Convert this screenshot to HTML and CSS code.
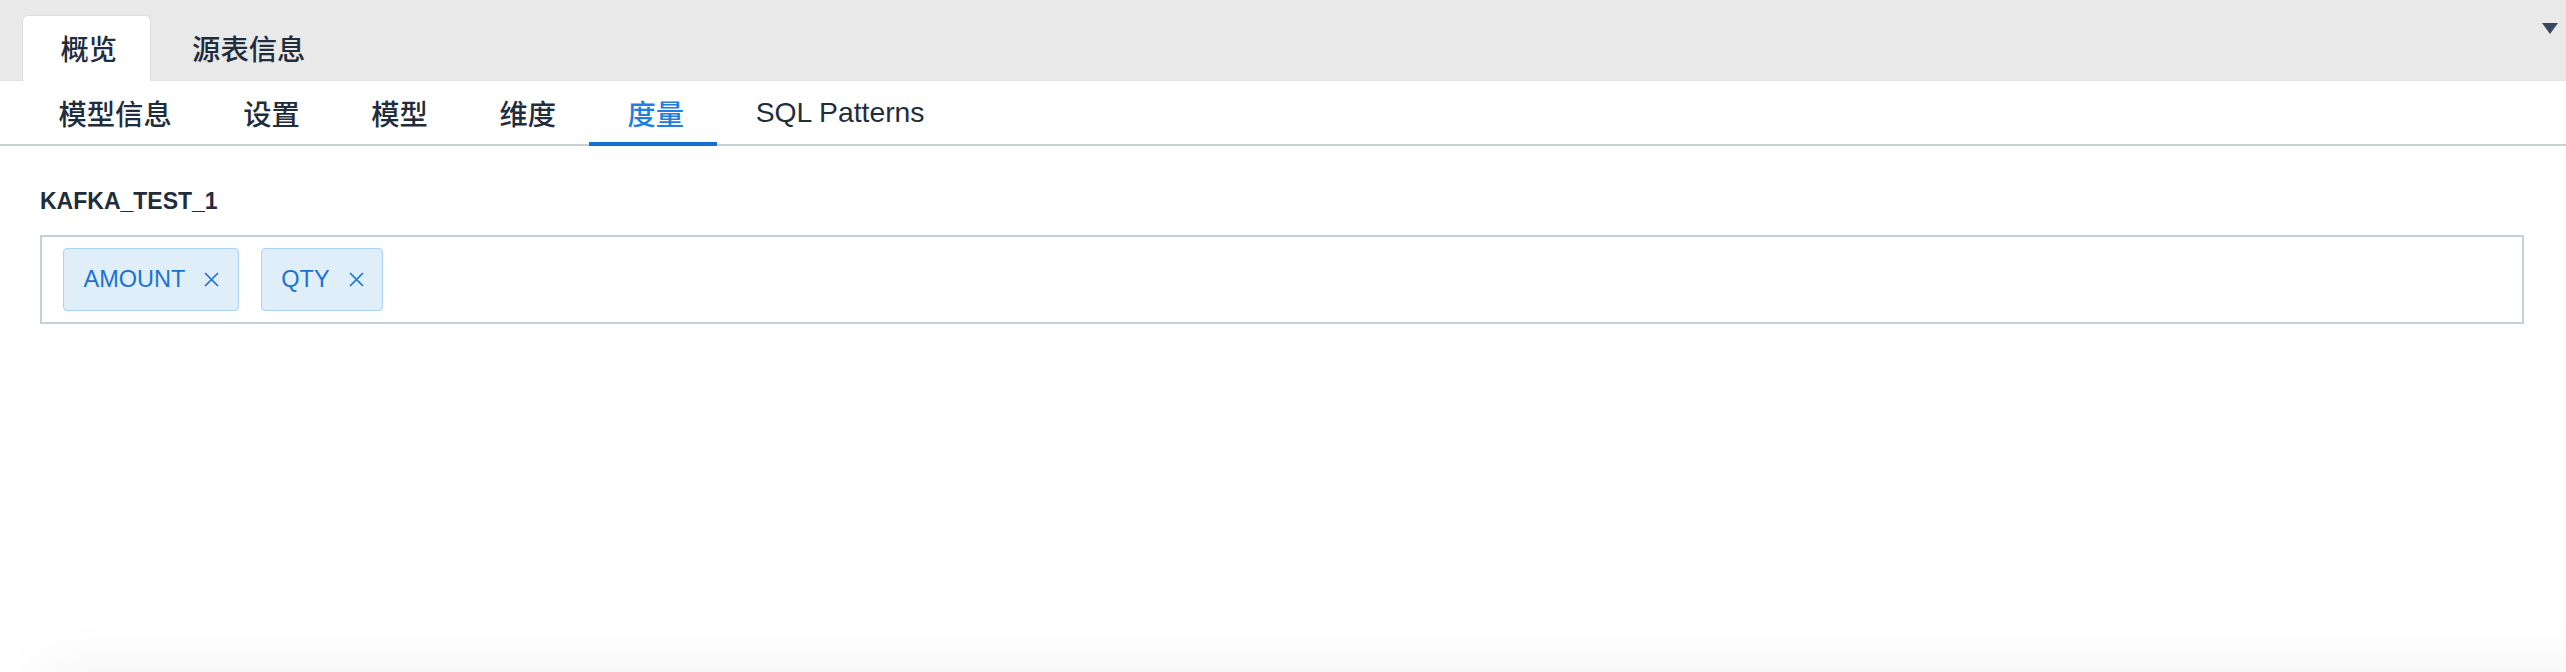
FILE: index.html
```html
<!DOCTYPE html>
<html lang="zh">
<head>
<meta charset="utf-8">
<title>概览</title>
<link rel="stylesheet" href="styles.css">
</head>
<body>
<div class="page">
  <div class="topbar">
    <div class="top-tabs">
      <div class="top-tab active">概览</div>
      <div class="top-tab">源表信息</div>
    </div>
    <div class="caret"></div>
  </div>
  <nav class="subnav">
    <div class="subnav-item">模型信息</div>
    <div class="subnav-item">设置</div>
    <div class="subnav-item">模型</div>
    <div class="subnav-item">维度</div>
    <div class="subnav-item active">度量</div>
    <div class="subnav-item">SQL Patterns</div>
  </nav>
  <main class="content">
    <h3 class="table-name">KAFKA_TEST_1</h3>
    <div class="tag-box">
      <span class="tag">AMOUNT<svg class="tag-close" viewBox="0 0 15 15" width="15" height="15"><path d="M1 1L14 14M14 1L1 14" /></svg></span>
      <span class="tag">QTY<svg class="tag-close" viewBox="0 0 15 15" width="15" height="15"><path d="M1 1L14 14M14 1L1 14" /></svg></span>
    </div>
  </main>
  <div class="below-panel"></div>
</div>
</body>
</html>
```
FILE: styles.css
```css
html, body {
  margin: 0;
  padding: 0;
  overflow: hidden;
  background: #ffffff;
}

body {
  font-family: "Liberation Sans", "Noto Sans CJK SC", sans-serif;
  color: #1f2d3d;
}

.page {
  width: 2566px;
  height: 672px;
  overflow: hidden;
}

.topbar {
  height: 81px;
  box-sizing: border-box;
  background: #e9e9e9;
  border-bottom: 1.5px solid #dfe3e7;
  display: flex;
  justify-content: space-between;
  align-items: flex-start;
  padding-left: 22px;
  padding-right: 8px;
}

.top-tabs {
  display: flex;
  align-items: flex-end;
  height: 81px;
}

.top-tab {
  height: 66px;
  box-sizing: border-box;
  display: flex;
  align-items: center;
  padding: 0 33px 2px 39px;
  font-size: 28.3px;
  font-weight: 500;
  margin-right: 2px;
  color: #1f2d3d;
}

.top-tab.active {
  background: #ffffff;
  border: 1.5px solid #dcdfe3;
  border-bottom: none;
  border-radius: 6px 6px 0 0;
  height: 66px;
  padding-left: 37.5px;
}

.caret {
  margin-top: 23px;
  width: 0;
  height: 0;
  border-left: 8px solid transparent;
  border-right: 8px solid transparent;
  border-top: 11px solid #34495e;
}

.subnav {
  display: flex;
  height: 65px;
  box-sizing: border-box;
  border-bottom: 2px solid #c8d0d4;
  padding-left: 20px;
  background: #ffffff;
}

.subnav-item {
  height: 65px;
  margin-bottom: -2px;
  box-sizing: border-box;
  border-bottom: 4px solid transparent;
  display: flex;
  align-items: center;
  padding: 2px 33px 0 38.5px;
  font-size: 28.3px;
  font-weight: 500;
  color: #1f2d3d;
}

.subnav-item.active {
  color: #1f7fe0;
  border-bottom-color: #1570d6;
}

.content {
  height: 526px;
  box-sizing: border-box;
  padding: 41px 42px 0 40px;
}

.table-name {
  margin: 0 0 20px 0;
  font-size: 23px;
  line-height: 28px;
  font-weight: bold;
  color: #1f2d3d;
}

.tag-box {
  border: 2px solid #c6d1d6;
  padding: 11px 21px;
  display: flex;
  gap: 22px;
}

.tag {
  display: inline-flex;
  align-items: center;
  gap: 19px;
  height: 63px;
  box-sizing: border-box;
  padding: 0 18.5px 0 19.5px;
  background: #e0eefa;
  border: 1.5px solid #a9d3f3;
  border-radius: 4px;
  font-size: 23.5px;
  color: #1a73d4;
}

.tag-close {
  display: block;
  stroke: #1a73d4;
  stroke-width: 1.7;
  fill: none;
}

.below-panel {
  height: 200px;
  margin-left: 40px;
  margin-right: -200px;
  background: #ffffff;
  box-shadow: 0 0 60px rgba(0, 0, 0, 0.06);
}
```
